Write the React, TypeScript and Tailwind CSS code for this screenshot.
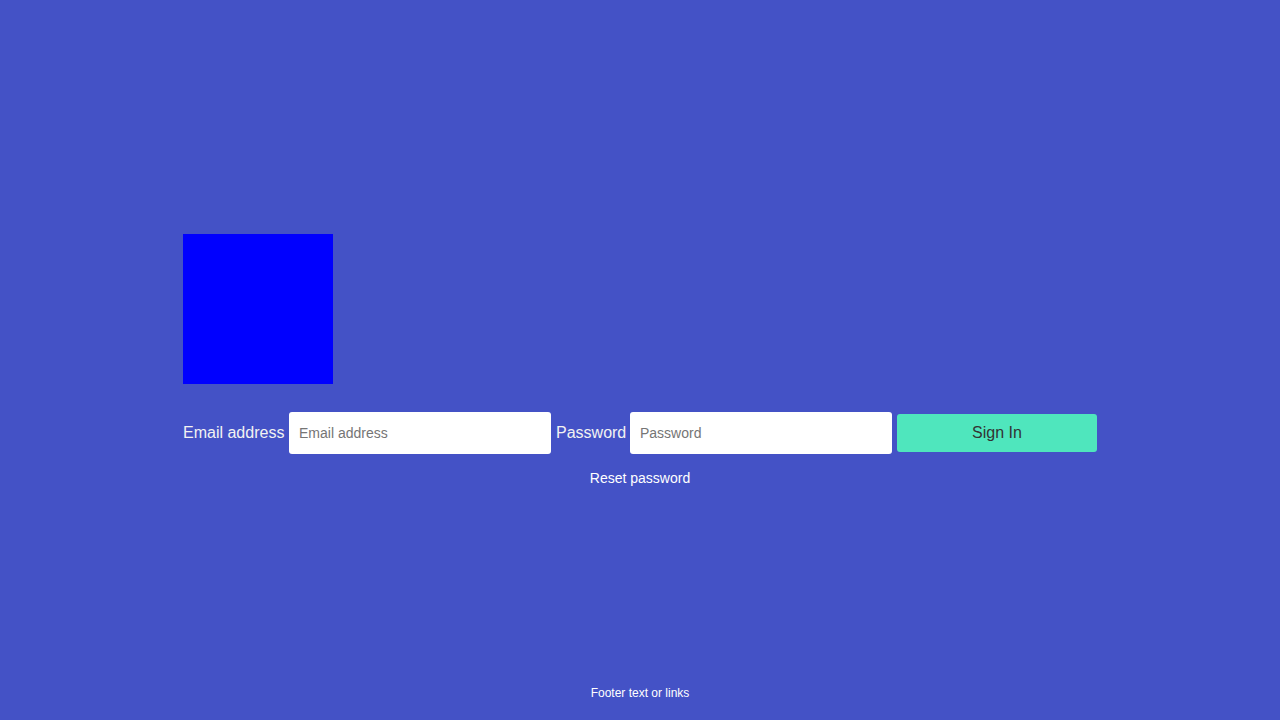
import React from "react";

export default function App() {
  return (
    <div
      className="flex h-screen flex-col bg-[#4452c6] text-white"
      style={{ fontFamily: '"Liberation Sans", Arial, sans-serif' }}
    >
      <main className="flex flex-1 flex-col justify-center pt-14">
        <div className="mx-auto w-[914px]">
          <div className="h-[150px] w-[150px] bg-[#0000ff]" />
          <form
            className="mt-[28px] flex items-center gap-[4px]"
            onSubmit={(e) => e.preventDefault()}
          >
            <label htmlFor="email" className="w-[102px] whitespace-nowrap text-[16px] leading-[18px] text-[#f2f2f2]">
              Email address
            </label>
            <input
              id="email"
              type="email"
              placeholder="Email address"
              className="h-[42px] w-[262px] rounded-[3px] bg-white px-[10px] text-[14px] text-[#333] placeholder:text-[#757575] outline-none"
            />
            <label htmlFor="password" className="ml-[1px] w-[70px] whitespace-nowrap text-[16px] leading-[18px] text-[#f2f2f2]">
              Password
            </label>
            <input
              id="password"
              type="password"
              placeholder="Password"
              className="h-[42px] w-[262px] rounded-[3px] bg-white px-[10px] text-[14px] text-[#333] placeholder:text-[#757575] outline-none"
            />
            <button
              type="submit"
              className="ml-[1px] h-[38px] w-[200px] rounded-[3px] bg-[#4fe6bd] text-[16px] text-[#333]"
            >
              Sign In
            </button>
          </form>
          <div className="mt-[16px] text-center text-[14px] leading-[16px] text-white">
            <a href="#">Reset password</a>
          </div>
        </div>
      </main>
      <footer className="flex h-14 items-center justify-center pt-[2px] text-[12px] text-white">
        Footer text or links
      </footer>
    </div>
  );
}
